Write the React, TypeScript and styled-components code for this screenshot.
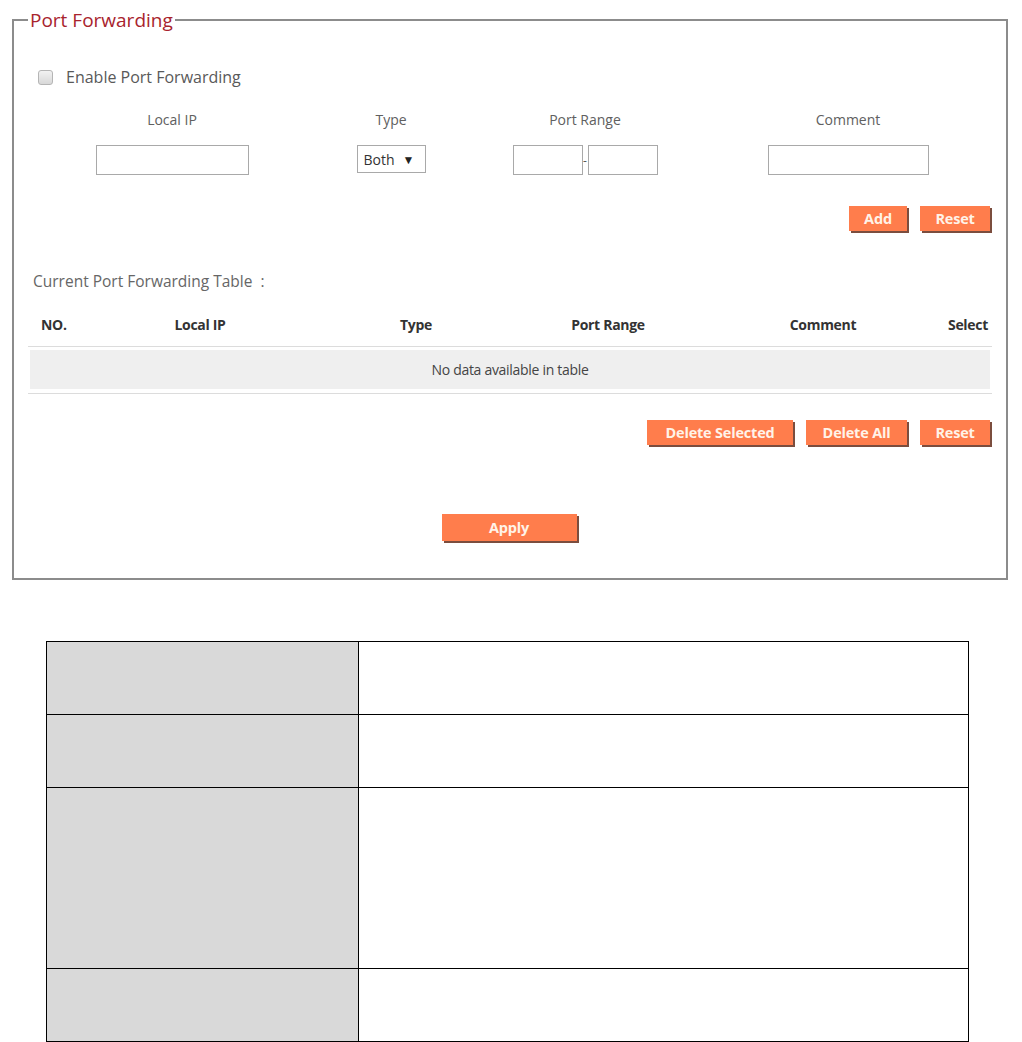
import React from 'react'
import styled, { createGlobalStyle } from 'styled-components'

const GlobalStyle = createGlobalStyle`
  html, body {
    margin: 0;
    padding: 0;
    background: #ffffff;
  }
  body {
    font-family: "Open Sans", "Noto Sans", sans-serif;
    color: #555;
  }
`

const Page = styled.div`
  width: 1022px;
  height: 1042px;
  overflow: hidden;
`

const Fieldset = styled.fieldset`
  margin: 8px 14px 0 12px;
  padding: 0 14px 0 14px;
  height: 572px;
  box-sizing: border-box;
  border: 2px solid #8c8c8c;
  border-radius: 0;
  min-width: 0;
`

const Legend = styled.legend`
  padding: 0 2px;
  font-size: 19px;
  line-height: 24px;
  color: #a8232d;
`

const EnableRow = styled.label`
  display: flex;
  align-items: center;
  gap: 13px;
  margin: 34px 0 0 10px;
  height: 22px;
  font-size: 16px;
  color: #595959;
`

const Box = styled.span`
  width: 13px;
  height: 13px;
  border: 1px solid #b5b5b5;
  border-radius: 3px;
  background: linear-gradient(#f2f2f2, #d8d8d8);
`

const FormGrid = styled.div`
  display: grid;
  grid-template-columns: 288px 150px 238px 288px;
  row-gap: 15px;
  margin-top: 22px;
`

const FieldLabel = styled.div`
  text-align: center;
  font-size: 14px;
  line-height: 20px;
  color: #606060;
`

const FieldCell = styled.div`
  display: flex;
  justify-content: center;
  align-items: center;
`

const TextBox = styled.div<{ $w: number }>`
  width: ${(p) => p.$w}px;
  height: 30px;
  box-sizing: border-box;
  border: 1px solid #a9a9a9;
  background: #fff;
`

const Dash = styled.span`
  width: 5px;
  height: 30px;
  display: flex;
  align-items: center;
  justify-content: center;
  font-size: 12px;
  color: #555;
`

const Select = styled.div`
  width: 69px;
  height: 28px;
  box-sizing: border-box;
  border: 1px solid #a9a9a9;
  display: flex;
  align-items: center;
  gap: 8px;
  padding-left: 6px;
  font-size: 14px;
  color: #333;
  margin-top: -2px;

  span {
    font-size: 12px;
    color: #222;
  }
`

const ButtonRow = styled.div<{ $top: number; $center?: boolean }>`
  display: flex;
  justify-content: ${(p) => (p.$center ? 'center' : 'flex-end')};
  gap: 13px;
  margin-top: ${(p) => p.$top}px;
  padding-right: 2px;
`

const OrangeButton = styled.button<{ $min?: number; $tall?: boolean }>`
  height: ${(p) => (p.$tall ? 27 : 25)}px;
  min-width: ${(p) => p.$min || 0}px;
  padding: 0 14px;
  border: none;
  border-radius: 0;
  background: #ff7d4c;
  box-shadow: 2px 2px 0 #7b4d3e;
  color: #fff3e8;
  font-family: "Open Sans", "Noto Sans", sans-serif;
  font-weight: 700;
  font-size: 14.5px;
  letter-spacing: -0.2px;
  line-height: 25px;
`

const TableTitle = styled.div`
  margin: 39px 0 0 5px;
  font-size: 15.5px;
  color: #666;
  line-height: 22px;
`

const Table = styled.div`
  margin-top: 13px;
`

const HeadRow = styled.div`
  display: grid;
  grid-template-columns: 54px 236px 196px 188px 242px 48px;
  height: 42px;
  padding-bottom: 2px;
  box-sizing: border-box;
  align-items: center;
  border-bottom: 1px solid #dcdcdc;
  font-size: 14px;
  font-weight: 700;
  color: #333;
  letter-spacing: -0.3px;
`

const HeadCell = styled.div<{ $left?: boolean }>`
  display: flex;
  justify-content: ${(p) => (p.$left ? 'flex-start' : 'center')};
  padding-left: ${(p) => (p.$left ? '13px' : '0')};
  white-space: nowrap;
`

const EmptyRow = styled.div`
  margin: 3px 2px 0;
  height: 39px;
  background: #efefef;
  display: flex;
  align-items: center;
  justify-content: center;
  font-size: 14px;
  color: #444;
  letter-spacing: -0.3px;
`

const TableEnd = styled.div`
  margin-top: 4px;
  border-top: 1px solid #dcdcdc;
`

const InfoTable = styled.table`
  margin: 61px 0 0 46px;
  width: 923px;
  border-collapse: collapse;

  td {
    border: 1.5px solid #000;
    padding: 0;
  }
`

const KeyCell = styled.td`
  width: 311px;
  background: #d9d9d9;
`

const InfoRow = styled.tr<{ $h: number }>`
  height: ${(p) => p.$h}px;
`

export default function App() {
  return (
    <Page>
      <GlobalStyle />
      <Fieldset>
        <Legend>Port Forwarding</Legend>
        <EnableRow>
          <Box />
          Enable Port Forwarding
        </EnableRow>

        <FormGrid>
          <FieldLabel>Local IP</FieldLabel>
          <FieldLabel>Type</FieldLabel>
          <FieldLabel>Port Range</FieldLabel>
          <FieldLabel>Comment</FieldLabel>
          <FieldCell>
            <TextBox $w={153} />
          </FieldCell>
          <FieldCell>
            <Select>
              Both <span>▼</span>
            </Select>
          </FieldCell>
          <FieldCell>
            <TextBox $w={70} />
            <Dash>-</Dash>
            <TextBox $w={70} />
          </FieldCell>
          <FieldCell>
            <TextBox $w={161} />
          </FieldCell>
        </FormGrid>

        <ButtonRow $top={31}>
          <OrangeButton $min={58}>Add</OrangeButton>
          <OrangeButton $min={70}>Reset</OrangeButton>
        </ButtonRow>

        <TableTitle>Current Port Forwarding Table &nbsp;:</TableTitle>

        <Table>
          <HeadRow>
            <HeadCell $left>NO.</HeadCell>
            <HeadCell>Local IP</HeadCell>
            <HeadCell>Type</HeadCell>
            <HeadCell>Port Range</HeadCell>
            <HeadCell>Comment</HeadCell>
            <HeadCell>Select</HeadCell>
          </HeadRow>
          <EmptyRow>No data available in table</EmptyRow>
          <TableEnd />
        </Table>

        <ButtonRow $top={26}>
          <OrangeButton $min={146}>Delete Selected</OrangeButton>
          <OrangeButton $min={101}>Delete All</OrangeButton>
          <OrangeButton $min={70}>Reset</OrangeButton>
        </ButtonRow>

        <ButtonRow $top={69} $center>
          <OrangeButton $min={135} $tall>Apply</OrangeButton>
        </ButtonRow>
      </Fieldset>

      <InfoTable>
        <tbody>
          <InfoRow $h={73}>
            <KeyCell />
            <td />
          </InfoRow>
          <InfoRow $h={73}>
            <KeyCell />
            <td />
          </InfoRow>
          <InfoRow $h={181}>
            <KeyCell />
            <td />
          </InfoRow>
          <InfoRow $h={73}>
            <KeyCell />
            <td />
          </InfoRow>
        </tbody>
      </InfoTable>
    </Page>
  )
}
